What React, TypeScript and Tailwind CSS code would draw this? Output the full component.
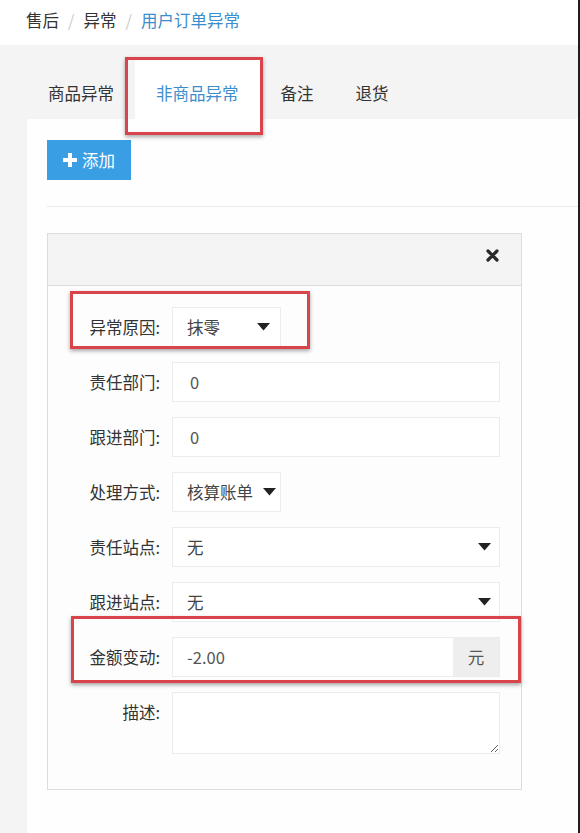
import React from 'react';

const Caret: React.FC = () => (
  <svg width="13" height="8" viewBox="0 0 13 8" className="shrink-0">
    <polygon points="0,0 13,0 6.5,7.5" fill="#222" />
  </svg>
);

const Label: React.FC<{ text: string; top?: boolean }> = ({ text, top }) => (
  <div className={`w-[112px] shrink-0 text-right text-[16.5px] text-[#333] ${top ? 'self-start pt-[8px]' : ''}`}>
    {text}:
  </div>
);

const App: React.FC = () => {
  const tabs = ['商品异常', '非商品异常', '备注', '退货'];

  return (
    <div
      className="relative flex w-[580px] h-[833px] overflow-hidden bg-[#f4f4f4]"
      style={{ fontFamily: '"Noto Sans CJK SC", "Noto Sans", sans-serif' }}
    >
      <div className="flex flex-col w-[578px]">
        {/* Breadcrumb */}
        <div className="h-[45px] shrink-0 bg-white flex items-center pb-[5px] pl-[26px] text-[16.5px] text-[#333]">
          <span>售后</span>
          <span className="mx-[9px] text-[#ccc]">/</span>
          <span>异常</span>
          <span className="mx-[9px] text-[#ccc]">/</span>
          <span className="text-[#3c8dcc]">用户订单异常</span>
        </div>

        <div className="flex-1 flex flex-col pl-[27px]">
          {/* Tabs */}
          <div className="h-[74px] shrink-0 flex items-end">
            {tabs.map((t, i) => (
              <div
                key={t}
                className={`h-[60px] px-[21px] pt-[22px] text-[16.5px] leading-[24px] ${
                  i === 1 ? 'bg-white text-[#3c8dcc]' : 'text-[#333]'
                }`}
              >
                {t}
              </div>
            ))}
          </div>

          {/* Tab content */}
          <div className="flex-1 bg-[#fefefe] pl-[20px] pt-[21px]">
            <button className="flex items-center justify-center gap-[5px] w-[84px] h-[40px] bg-[#3a9ee4] text-white text-[16.5px]">
              <svg width="14" height="14" viewBox="0 0 14 14">
                <rect x="5" y="0" width="4" height="14" fill="#fff" />
                <rect x="0" y="5" width="14" height="4" fill="#fff" />
              </svg>
              <span>添加</span>
            </button>

            <div className="mt-[26px] border-t border-[#eaeaea]" />

            {/* Inner panel */}
            <div className="mt-[26px] w-[475px] border border-[#dddddd] bg-[#fdfdfd]">
              <div className="h-[52px] bg-[#f4f4f5] border-b border-[#dddddd] flex items-center justify-end pb-[8px] pr-[22px]">
                <svg width="13" height="13" viewBox="0 0 13 13">
                  <path d="M2 2 L11 11 M11 2 L2 11" stroke="#2a2a2a" strokeWidth="3.2" strokeLinecap="round" />
                </svg>
              </div>

              <div className="pt-[21px] pb-[35px] flex flex-col gap-[15px]">
                <div className="flex items-center h-[40px]">
                  <Label text="异常原因" />
                  <div className="ml-[12px] w-[109px] h-[40px] border border-[#ececec] bg-white flex items-center justify-between pl-[14px] pr-[10px] text-[16.5px] text-[#444]">
                    <span>抹零</span>
                    <Caret />
                  </div>
                </div>

                <div className="flex items-center h-[40px]">
                  <Label text="责任部门" />
                  <div className="ml-[12px] w-[328px] h-[40px] border border-[#ececec] bg-white flex items-center pl-[17px] text-[16.5px] text-[#555]">
                    0
                  </div>
                </div>

                <div className="flex items-center h-[40px]">
                  <Label text="跟进部门" />
                  <div className="ml-[12px] w-[328px] h-[40px] border border-[#ececec] bg-white flex items-center pl-[17px] text-[16.5px] text-[#555]">
                    0
                  </div>
                </div>

                <div className="flex items-center h-[40px]">
                  <Label text="处理方式" />
                  <div className="ml-[12px] w-[109px] h-[40px] border border-[#ececec] bg-white flex items-center justify-between pl-[14px] pr-[4px] text-[16.5px] text-[#444]">
                    <span>核算账单</span>
                    <Caret />
                  </div>
                </div>

                <div className="flex items-center h-[40px]">
                  <Label text="责任站点" />
                  <div className="ml-[12px] w-[328px] h-[40px] border border-[#ececec] bg-white flex items-center justify-between pl-[14px] pr-[8px] text-[16.5px] text-[#444]">
                    <span>无</span>
                    <Caret />
                  </div>
                </div>

                <div className="flex items-center h-[40px]">
                  <Label text="跟进站点" />
                  <div className="ml-[12px] w-[328px] h-[40px] border border-[#ececec] bg-white flex items-center justify-between pl-[14px] pr-[8px] text-[16.5px] text-[#444]">
                    <span>无</span>
                    <Caret />
                  </div>
                </div>

                <div className="flex items-center h-[40px]">
                  <Label text="金额变动" />
                  <div className="ml-[12px] w-[328px] h-[40px] border border-[#ececec] bg-white flex text-[16.5px] text-[#555]">
                    <div className="flex-1 flex items-center pl-[14px]">-2.00</div>
                    <div className="w-[46px] bg-[#eeeeee] flex items-center justify-center text-[#555]">元</div>
                  </div>
                </div>

                <div className="flex items-start">
                  <Label text="描述" top />
                  <textarea
                    readOnly
                    className="ml-[12px] w-[328px] h-[62px] border border-[#ececec] bg-white outline-none"
                  />
                </div>
              </div>
            </div>
          </div>
        </div>
      </div>
      <div className="w-[2px] bg-[#1e1e1e]" />

      {/* Annotation boxes */}
      <div className="absolute left-[125px] top-[57px] w-[138px] h-[78px] border-[3px] border-[#d9434a] shadow-[0_2px_4px_rgba(0,0,0,0.35)]" />
      <div className="absolute left-[70px] top-[291px] w-[240px] h-[58px] border-[3px] border-[#d9434a] shadow-[0_2px_4px_rgba(0,0,0,0.35)]" />
      <div className="absolute left-[71px] top-[616px] w-[450px] h-[67px] border-[3px] border-[#d9434a] shadow-[0_2px_4px_rgba(0,0,0,0.35)]" />
    </div>
  );
};

export default App;
